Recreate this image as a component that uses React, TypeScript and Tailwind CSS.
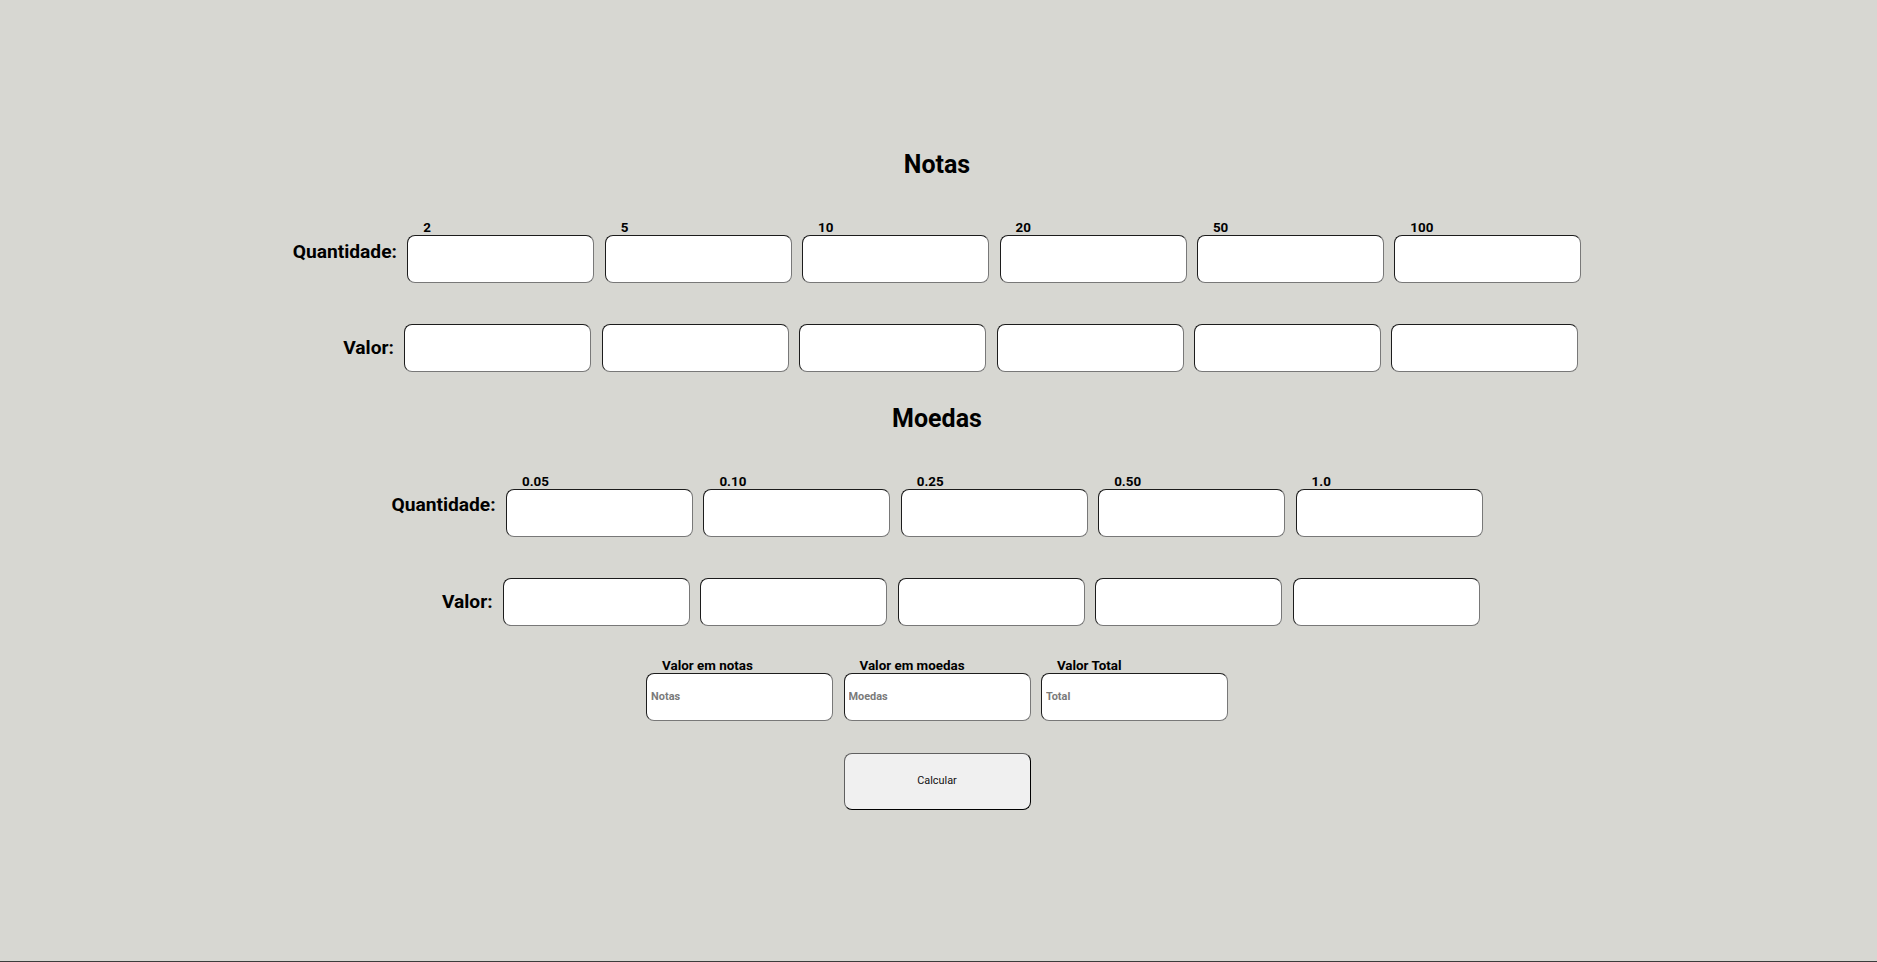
import React from "react";

const notas = ["2", "5", "10", "20", "50", "100"];
const moedas = ["0.05", "0.10", "0.25", "0.50", "1.0"];

const boxCls =
  "block w-[187px] h-[48px] rounded-[8px] bg-white border border-t-[#1c1c1c] border-l-[#1c1c1c] border-r-[#787878] border-b-[#787878] outline-none px-[4px] text-[10.9px] font-bold text-black placeholder:text-[#7a7a7a]";

function Box({ placeholder }: { placeholder?: string }) {
  return <input type="text" className={boxCls} placeholder={placeholder} />;
}

function Labeled({ label, placeholder }: { label: string; placeholder?: string }) {
  return (
    <div className="flex flex-col">
      <div className="pl-[16px] text-[13.4px] leading-[15px] font-bold">{label}</div>
      <Box placeholder={placeholder} />
    </div>
  );
}

function Section({ items }: { items: string[] }) {
  return (
    <div className="flex flex-col">
      <div className="flex items-center gap-[10.4px]">
        <h3 className="text-[19.2px] leading-[22px] font-bold">Quantidade:</h3>
        <div className="flex gap-[10.4px]">
          {items.map((it) => (
            <Labeled key={it} label={it} />
          ))}
        </div>
      </div>
      <div className="flex items-center gap-[10.4px] mt-[41px] -ml-[3px] mr-[3px]">
        <h3 className="flex-1 text-right text-[19.2px] leading-[22px] font-bold">Valor:</h3>
        <div className="flex gap-[10.4px]">
          {items.map((it) => (
            <Box key={it} />
          ))}
        </div>
      </div>
    </div>
  );
}

export default function App() {
  return (
    <div className="h-screen box-border border-b border-[#3c3c3c] bg-[#d7d7d2] font-['Roboto',sans-serif] text-black overflow-hidden">
      <div className="pt-[151px] pr-[3px] flex flex-col items-center">
        <h2 className="text-[25px] leading-[28px] font-bold">Notas</h2>
        <div className="mt-[41px]">
          <Section items={notas} />
        </div>
        <h2 className="mt-[33px] text-[25px] leading-[28px] font-bold">Moedas</h2>
        <div className="mt-[40.6px]">
          <Section items={moedas} />
        </div>
        <div className="mt-[32px] flex gap-[10.4px]">
          <Labeled label="Valor em notas" placeholder="Notas" />
          <Labeled label="Valor em moedas" placeholder="Moedas" />
          <Labeled label="Valor Total" placeholder="Total" />
        </div>
        <button
          type="button"
          className="mt-[32px] w-[187px] h-[57px] rounded-[8px] bg-[#f0f0f0] border border-t-[#606060] border-l-[#606060] border-r-[#000000] border-b-[#000000] text-[10.9px] text-[#111]"
        >
          Calcular
        </button>
      </div>
    </div>
  );
}
